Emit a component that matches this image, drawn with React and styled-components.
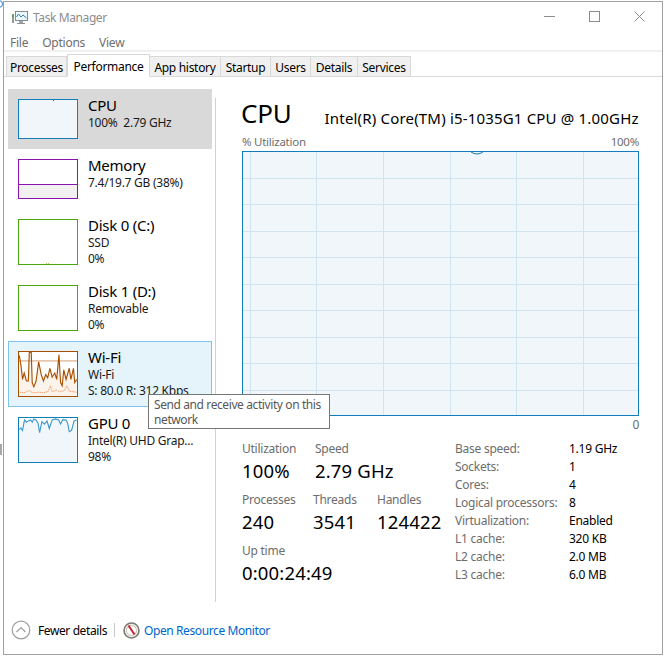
import React from 'react'
import styled, { createGlobalStyle } from 'styled-components'

const GlobalStyle = createGlobalStyle`
  html, body { margin: 0; padding: 0; background: #fff; }
  body {
    font-family: "Noto Sans", "Open Sans", sans-serif;
    font-size: 12px;
    letter-spacing: -0.25px;
    color: #000;
  }
`

const Page = styled.div`
  width: 669px;
  height: 656px;
  padding: 1px 0 0 3px;
  box-sizing: border-box;
  position: relative;
  overflow: hidden;
`
const Window = styled.div`
  width: 660px;
  height: 654px;
  box-sizing: border-box;
  border: 1px solid #a0a0a0;
  background: #fff;
  display: flex;
  flex-direction: column;
`
const TitleBar = styled.div`
  height: 31px;
  display: flex;
  align-items: center;
  padding-left: 8px;
  flex: none;
`
const TitleText = styled.span`
  color: #8c8c8c;
  flex: 1;
  margin: -1px 0 0 5px;
  letter-spacing: -0.4px;
`
const WinButton = styled.div`
  width: 45px;
  height: 31px;
  display: flex;
  align-items: center;
  justify-content: center;
  margin-top: -2px;
`
const MenuBar = styled.div`
  height: 16px;
  padding: 1px 0 0 6px;
  flex: none;
  display: flex;
  gap: 14px;
  align-items: center;
  color: #6e6e6e;
  border-bottom: 2px solid #f0f0f0;
  box-sizing: content-box;
`
const TabBar = styled.div`
  height: 24px;
  flex: none;
  display: flex;
  align-items: flex-end;
  padding-left: 2px;
  border-bottom: 1px solid #d9d9d9;
`
const Tab = styled.div`
  width: ${p => p.$w}px;
  height: ${p => (p.$active ? 23 : 20)}px;
  box-sizing: border-box;
  display: flex;
  align-items: ${p => (p.$active ? 'flex-start' : 'center')};
  justify-content: center;
  background: ${p => (p.$active ? '#fff' : '#f0f0f0')};
  border: 1px solid #d9d9d9;
  border-bottom: ${p => (p.$active ? '1px solid #fff' : 'none')};
  border-left: ${p => (p.$first || p.$active ? '1px solid #d9d9d9' : 'none')};
  margin-bottom: ${p => (p.$active ? '-1px' : '0')};
  padding-top: ${p => (p.$active ? '3px' : '1px')};
  letter-spacing: -0.3px;
  white-space: nowrap;
`
const Content = styled.div`
  flex: 1;
  display: flex;
  min-height: 0;
`
const Sidebar = styled.div`
  width: 204px;
  margin: 12px 3px 0 4px;
  flex: none;
  display: flex;
  flex-direction: column;
`
const Divider = styled.div`
  width: 1px;
  background: #d0d0d0;
  margin-top: 21px;
  flex: none;
`
const Item = styled.div`
  height: ${p => p.$h}px;
  box-sizing: border-box;
  flex: none;
  padding: ${p => (p.$hover ? '9px 9px' : '10px 10px')};
  display: flex;
  gap: 10px;
  background: ${p => (p.$selected ? '#d9d9d9' : p.$hover ? '#e5f3fb' : 'transparent')};
  border: ${p => (p.$hover ? '1px solid #7fc4ec' : 'none')};
`
const Thumb = styled.div`
  width: 60px;
  height: ${p => p.$h}px;
  flex: none;
  box-sizing: border-box;
  border: 1px solid ${p => p.$color};
  background: ${p => p.$fill || '#fff'};
  svg { display: block; width: 100%; height: 100%; }
`
const ItemText = styled.div`
  margin-top: -4px;
  white-space: nowrap;
`
const ItemTitle = styled.div`
  font-size: 15px;
  line-height: 20px;
`
const ItemSub = styled.div`
  line-height: 16px;
  color: #1a1a1a;
`
const Main = styled.div`
  flex: 1;
  padding: 20px 24px 0 26px;
  position: relative;
`
const Heading = styled.div`
  display: flex;
  align-items: center;
  gap: 33px;
  height: 32px;
  margin-left: -1px;
  white-space: nowrap;
`
const HeadingBig = styled.div`
  font-size: 26px;
  letter-spacing: -0.2px;
`
const HeadingCpu = styled.div`
  font-size: 15px;
  letter-spacing: 0.18px;
  padding-top: 10px;
`
const GraphLabels = styled.div`
  display: flex;
  justify-content: space-between;
  color: #6d6d6d;
  width: 397px;
  height: 17px;
  line-height: 16px;
  margin-top: 5px;
  font-size: 11.5px;
`
const Graph = styled.div`
  height: 265px;
  width: 397px;
  svg { display: block; }
`
const GraphZero = styled.div`
  width: 397px;
  text-align: right;
  color: #6d6d6d;
  height: 19px;
  line-height: 18px;
`
const Stats = styled.div`
  display: flex;
  margin-top: 6px;
`
const StatsLeft = styled.div`
  width: 213px;
  flex: none;
`
const StatRow = styled.div`
  display: flex;
  height: 51px;
`
const Stat = styled.div`
  width: ${p => p.$w}px;
  flex: none;
`
const StatLabel = styled.div`
  color: #6d6d6d;
  line-height: 16px;
  white-space: nowrap;
`
const StatValue = styled.div`
  font-size: 18.5px;
  line-height: 26px;
  margin-top: 1px;
  letter-spacing: 0.15px;
  white-space: nowrap;
`
const Spec = styled.div`
  display: grid;
  grid-template-columns: 114px auto;
  grid-auto-rows: 18px;
  line-height: 16px;
`
const SpecLabel = styled.div`
  color: #6d6d6d;
  white-space: nowrap;
`
const SpecValue = styled.div`
  white-space: nowrap;
`
const Footer = styled.div`
  height: 52px;
  flex: none;
  display: flex;
  align-items: center;
  padding: 4px 0 0 7px;
  box-sizing: border-box;
  letter-spacing: -0.4px;
`
const FewerLabel = styled.span`
  margin-left: 7px;
`
const FooterSep = styled.div`
  width: 1px;
  height: 14px;
  background: #c8c8c8;
  margin: 0 8px 0 7px;
`
const MonitorLink = styled.span`
  color: #0066cc;
  margin-left: 4px;
`
const Tooltip = styled.div`
  position: absolute;
  left: 148px;
  top: 394px;
  width: 182px;
  height: 35px;
  box-sizing: border-box;
  border: 1px solid #767676;
  background: #fff;
  color: #575757;
  padding: 2px 2px 2px 5px;
  line-height: 15px;
  letter-spacing: -0.4px;
`
const EdgeMark = styled.div`
  position: absolute;
  left: 0;
  top: 444px;
  width: 2px;
  height: 11px;
  background: #a8a8a8;
`
const EdgeDot = styled.div`
  position: absolute;
  left: -5px;
  top: 0;
  width: 6px;
  height: 6px;
  border: 1px solid #2a7fd0;
  border-radius: 50%;
`

const TaskIcon = () => (
  <svg width="16" height="16" viewBox="0 0 16 16">
    <rect x="3.5" y="1.5" width="12" height="9" fill="#eef7fc" stroke="#808c94" />
    <path d="M4.5 7 L6.5 4 L9 7 L11 5 L14.5 8" fill="none" stroke="#2b86c5" />
    <rect x="0" y="4" width="2" height="9" fill="#8f9a96" />
    <rect x="0" y="5" width="2" height="2" fill="#52a852" />
    <rect x="7" y="11" width="4" height="2" fill="#a0a8ac" />
    <rect x="5" y="13" width="8" height="1" fill="#8a9498" />
  </svg>
)

const WIFI_LINE = 'M10 20 L15 50 L20 95 L25 75 L32 100 L38 100 L41 10 L47 10 L50 105 L55 118 L62 100 L70 40 L78 80 L85 100 L92 80 L98 90 L105 60 L112 88 L120 75 L126 95 L133 18 L138 105 L143 115 L148 65 L155 95 L165 60 L170 95 L178 60 L182 105 L188 95'

const WifiChart = () => (
  <svg viewBox="9 9 180 138" preserveAspectRatio="none">
    <path d={`${WIFI_LINE} V147 H10 Z`} fill="#fcf3eb" />
    <path d="M9 37 H189" stroke="#cf9a70" strokeWidth="3" fill="none" />
    <path d={WIFI_LINE} stroke="#a74f01" strokeWidth="3.5" fill="none" />
    <path d="M12 135 L25 137 L40 130 L52 137 L70 135 L85 137 L100 132 L106 115 L112 134 L125 128 L135 134 L150 130 L158 115 L165 132 L188 135" stroke="#ef8a50" strokeWidth="2.5" strokeDasharray="4 2" fill="none" />
  </svg>
)

const GPU_LINE = 'M10 45 L15 40 L20 48 L26 15 L32 22 L38 18 L45 15 L50 22 L55 12 L62 15 L68 25 L73 55 L80 20 L88 28 L96 18 L103 42 L112 15 L122 12 L132 15 L138 28 L145 14 L155 15 L160 25 L165 52 L172 48 L180 18 L188 15'

const GpuChart = () => (
  <svg viewBox="9 9 180 138" preserveAspectRatio="none">
    <path d={`${GPU_LINE} V147 H10 Z`} fill="#f1f6fa" />
    <path d={GPU_LINE} stroke="#3b97cf" strokeWidth="3.5" fill="none" />
  </svg>
)

const MemoryChart = () => (
  <svg viewBox="0 0 58 38" preserveAspectRatio="none">
    <rect y="24.5" width="58" height="14" fill="#f1f1f1" />
    <path d="M0 24.5 H58" stroke="#8b12ae" />
  </svg>
)

const DiskChart = () => (
  <svg viewBox="0 0 58 44" preserveAspectRatio="none">
    <path d="M27 43.5 h1 M29 43.5 h1" stroke="#9fcf7a" />
  </svg>
)

const CpuThumbChart = () => (
  <svg viewBox="0 0 58 38" preserveAspectRatio="none">
    <path d="M34.5 0 v1" stroke="#117dbb" />
  </svg>
)

const CpuGraph = () => {
  const vs = [8, 74, 141, 208, 274, 341]
  const hs = [27, 53, 80, 106, 133, 159, 186, 212, 239]
  return (
    <svg width="397" height="265">
      <rect x="0.5" y="0.5" width="396" height="264" fill="#f1f6fa" stroke="#117dbb" />
      {vs.map(x => <path key={x} d={`M${x + 0.5} 1 V264`} stroke="#cfe3f1" />)}
      {hs.map(y => <path key={y} d={`M1 ${y + 0.5} H396`} stroke="#cfe3f1" />)}
      <path d="M229 1 Q235 5 241 1" stroke="#117dbb" fill="none" />
    </svg>
  )
}

const TABS = [
  ['Processes', 61], ['Performance', 83], ['App history', 71], ['Startup', 50],
  ['Users', 40], ['Details', 47], ['Services', 53],
]

const SPECS = [
  ['Base speed:', '1.19 GHz'], ['Sockets:', '1'], ['Cores:', '4'], ['Logical processors:', '8'],
  ['Virtualization:', 'Enabled'], ['L1 cache:', '320 KB'], ['L2 cache:', '2.0 MB'], ['L3 cache:', '6.0 MB'],
]

export default function App() {
  return (
    <Page>
      <GlobalStyle />
      <EdgeDot />
      <EdgeMark />
      <Window>
        <TitleBar>
          <TaskIcon />
          <TitleText>Task Manager</TitleText>
          <WinButton>
            <svg width="11" height="11"><path d="M0 5.5 H11" stroke="#8c8c8c" /></svg>
          </WinButton>
          <WinButton>
            <svg width="11" height="11"><rect x="0.5" y="0.5" width="10" height="10" fill="none" stroke="#8c8c8c" /></svg>
          </WinButton>
          <WinButton>
            <svg width="11" height="11"><path d="M0.5 0.5 L10.5 10.5 M10.5 0.5 L0.5 10.5" stroke="#8c8c8c" /></svg>
          </WinButton>
        </TitleBar>
        <MenuBar>
          <span>File</span><span>Options</span><span>View</span>
        </MenuBar>
        <TabBar>
          {TABS.map(([name, w], i) => (
            <Tab key={name} $w={w} $first={i === 0} $active={name === 'Performance'}>{name}</Tab>
          ))}
        </TabBar>
        <Content>
          <Sidebar>
            <Item $h={60} $selected>
              <Thumb $h={40} $color="#117dbb" $fill="#f1f6fa"><CpuThumbChart /></Thumb>
              <ItemText>
                <ItemTitle>CPU</ItemTitle>
                <ItemSub>100%&nbsp; 2.79 GHz</ItemSub>
              </ItemText>
            </Item>
            <Item $h={60}>
              <Thumb $h={40} $color="#8b12ae"><MemoryChart /></Thumb>
              <ItemText>
                <ItemTitle>Memory</ItemTitle>
                <ItemSub>7.4/19.7 GB (38%)</ItemSub>
              </ItemText>
            </Item>
            <Item $h={66}>
              <Thumb $h={46} $color="#4da60c"><DiskChart /></Thumb>
              <ItemText>
                <ItemTitle>Disk 0 (C:)</ItemTitle>
                <ItemSub>SSD</ItemSub>
                <ItemSub>0%</ItemSub>
              </ItemText>
            </Item>
            <Item $h={66}>
              <Thumb $h={46} $color="#4da60c" />
              <ItemText>
                <ItemTitle>Disk 1 (D:)</ItemTitle>
                <ItemSub>Removable</ItemSub>
                <ItemSub>0%</ItemSub>
              </ItemText>
            </Item>
            <Item $h={66} $hover>
              <Thumb $h={46} $color="#a74f01"><WifiChart /></Thumb>
              <ItemText>
                <ItemTitle>Wi-Fi</ItemTitle>
                <ItemSub>Wi-Fi</ItemSub>
                <ItemSub>S: 80.0 R: 312 Kbps</ItemSub>
              </ItemText>
            </Item>
            <Item $h={66}>
              <Thumb $h={46} $color="#117dbb"><GpuChart /></Thumb>
              <ItemText>
                <ItemTitle>GPU 0</ItemTitle>
                <ItemSub>Intel(R) UHD Grap...</ItemSub>
                <ItemSub>98%</ItemSub>
              </ItemText>
            </Item>
          </Sidebar>
          <Divider />
          <Main>
            <Heading>
              <HeadingBig>CPU</HeadingBig>
              <HeadingCpu>Intel(R) Core(TM) i5-1035G1 CPU @ 1.00GHz</HeadingCpu>
            </Heading>
            <GraphLabels>
              <span>% Utilization</span><span>100%</span>
            </GraphLabels>
            <Graph><CpuGraph /></Graph>
            <GraphZero>0</GraphZero>
            <Stats>
              <StatsLeft>
                <StatRow>
                  <Stat $w={73}><StatLabel>Utilization</StatLabel><StatValue>100%</StatValue></Stat>
                  <Stat $w={100}><StatLabel>Speed</StatLabel><StatValue>2.79 GHz</StatValue></Stat>
                </StatRow>
                <StatRow>
                  <Stat $w={71}><StatLabel>Processes</StatLabel><StatValue>240</StatValue></Stat>
                  <Stat $w={64}><StatLabel>Threads</StatLabel><StatValue>3541</StatValue></Stat>
                  <Stat $w={70}><StatLabel>Handles</StatLabel><StatValue>124422</StatValue></Stat>
                </StatRow>
                <StatRow>
                  <Stat $w={120}><StatLabel>Up time</StatLabel><StatValue>0:00:24:49</StatValue></Stat>
                </StatRow>
              </StatsLeft>
              <Spec>
                {SPECS.map(([k, v]) => (
                  <React.Fragment key={k}>
                    <SpecLabel>{k}</SpecLabel>
                    <SpecValue>{v}</SpecValue>
                  </React.Fragment>
                ))}
              </Spec>
            </Stats>
          </Main>
        </Content>
        <Footer>
          <svg width="20" height="20" viewBox="0 0 20 20">
            <circle cx="10" cy="10" r="8.8" fill="#fff" stroke="#a0a0a0" strokeWidth="1.2" />
            <path d="M5.5 12 L10 7.5 L14.5 12" fill="none" stroke="#a0a0a0" strokeWidth="1.2" />
          </svg>
          <FewerLabel>Fewer details</FewerLabel>
          <FooterSep />
          <svg width="17" height="17" viewBox="0 0 17 17">
            <circle cx="8.5" cy="8.5" r="7.5" fill="#f2efea" stroke="#7d7a74" strokeWidth="1.6" />
            <circle cx="8.5" cy="8.5" r="5" fill="#fff" stroke="#c4c0b8" />
            <path d="M5.5 3.5 L11.5 12.5" stroke="#c8262c" strokeWidth="2" />
          </svg>
          <MonitorLink>Open Resource Monitor</MonitorLink>
        </Footer>
      </Window>
      <Tooltip>Send and receive activity on this network</Tooltip>
    </Page>
  )
}
